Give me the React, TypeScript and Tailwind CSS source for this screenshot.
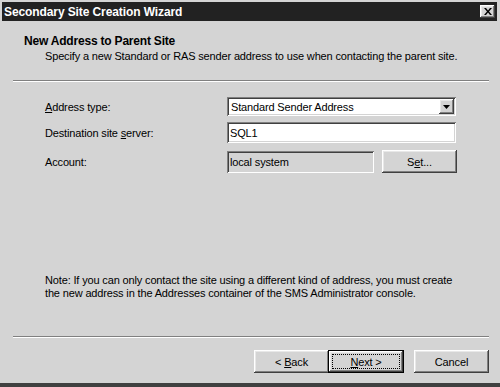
import React from "react";

const raised =
  "shadow-[inset_-1px_-1px_#404040,inset_1px_1px_#ffffff,inset_-2px_-2px_#808080,inset_2px_2px_#e8e8e8]";
const sunken =
  "shadow-[inset_1px_1px_#808080,inset_-1px_-1px_#ffffff,inset_2px_2px_#404040,inset_-2px_-2px_#d4d4d4]";

function Sep() {
  return (
    <div className="mx-[13px] mr-[11px] flex flex-col">
      <div className="h-px bg-[#808080]" />
      <div className="h-px bg-white" />
    </div>
  );
}

function Btn({ children, def }: { children: React.ReactNode; def?: boolean }) {
  if (def) {
    return (
      <div className="w-[76px] h-[23px] border border-black bg-[#d4d4d4] flex">
        <div className={`flex-1 flex items-center justify-center p-[3px] ${raised}`}>
          <div className="flex-1 h-full flex items-center justify-center border border-dotted border-black">
            <span>{children}</span>
          </div>
        </div>
      </div>
    );
  }
  return (
    <div className={`w-[75px] h-[23px] bg-[#d4d4d4] flex items-center justify-center ${raised}`}>
      <span>{children}</span>
    </div>
  );
}

export default function App() {
  return (
    <div
      className="w-[500px] h-[387px] bg-[#d4d4d4] text-black overflow-hidden flex flex-col text-[11px] leading-[14px] tracking-[-0.15px]"
      style={{ fontFamily: '"Liberation Sans", Arial, sans-serif' }}
    >
      <div className="h-[2px]" />
      <div className="mx-[2px] mr-[3px] h-[19px] bg-[#222222] flex items-center justify-between pl-[2px] pr-[2px]">
        <span className="text-white font-bold text-[12px] tracking-[-0.1px]">Secondary Site Creation Wizard</span>
        <div className={`w-[15px] h-[13px] bg-[#d4d4d4] flex items-center justify-center ${raised}`}>
          <svg width="8" height="7" viewBox="0 0 8 7">
            <path d="M0 0h2l2 2.5L6 0h2L5 3.5 8 7H6L4 4.5 2 7H0l3-3.5z" fill="#000" />
          </svg>
        </div>
      </div>
      <div className="h-[13px]" />
      <div className="pl-[24px] font-bold text-[12px] tracking-[-0.2px]">New Address to Parent Site</div>
      <div className="pl-[45px] mt-[1px]">Specify a new Standard or RAS sender address to use when contacting the parent site.</div>
      <div className="h-[17px]" />
      <Sep />
      <div className="h-[15px]" />
      <div className="pl-[45px] flex flex-col gap-[6px]">
        <div className="flex items-center h-[19px]">
          <div className="w-[182px]">
            <u>A</u>ddress type:
          </div>
          <div className={`w-[229px] h-[19px] bg-white flex items-center pl-[4px] pr-[2px] ${sunken}`}>
            <span className="flex-1">Standard Sender Address</span>
            <div className={`w-[15px] h-[15px] bg-[#d4d4d4] flex items-center justify-center ${raised}`}>
              <svg width="7" height="4" viewBox="0 0 7 4">
                <path d="M0 0h7L3.5 4z" fill="#000" />
              </svg>
            </div>
          </div>
        </div>
        <div className="flex items-center h-[21px]">
          <div className="w-[182px]">
            Destination site <u>s</u>erver:
          </div>
          <div className={`w-[229px] h-[21px] bg-white flex items-center pl-[3px] ${sunken}`}>SQL1</div>
        </div>
        <div className="flex items-center h-[23px] mt-[1px]">
          <div className="w-[182px]">Account:</div>
          <div className={`w-[147px] h-[22px] bg-[#d4d4d4] flex items-center pl-[3px] ${sunken}`}>local system</div>
          <div className="w-[8px]" />
          <div className={`w-[75px] h-[23px] flex items-center justify-center ${raised}`}>
            <span>
              S<u>e</u>t...
            </span>
          </div>
        </div>
      </div>
      <div className="h-[101px]" />
      <div className="pl-[45px] leading-[13px]">
        <div>Note: If you can only contact the site using a different kind of address, you must create</div>
        <div>the new address in the Addresses container of the SMS Administrator console.</div>
      </div>
      <div className="h-[36px]" />
      <Sep />
      <div className="h-[12px]" />
      <div className="flex pl-[254px]">
        <Btn>
          &lt; <u>B</u>ack
        </Btn>
        <div className="-ml-[1px]" />
        <Btn def>
          <u>N</u>ext &gt;
        </Btn>
        <div className="w-[10px]" />
        <Btn>Cancel</Btn>
      </div>
      <div className="flex-1" />
      <div className="h-[4px] bg-[#404040]" />
    </div>
  );
}
